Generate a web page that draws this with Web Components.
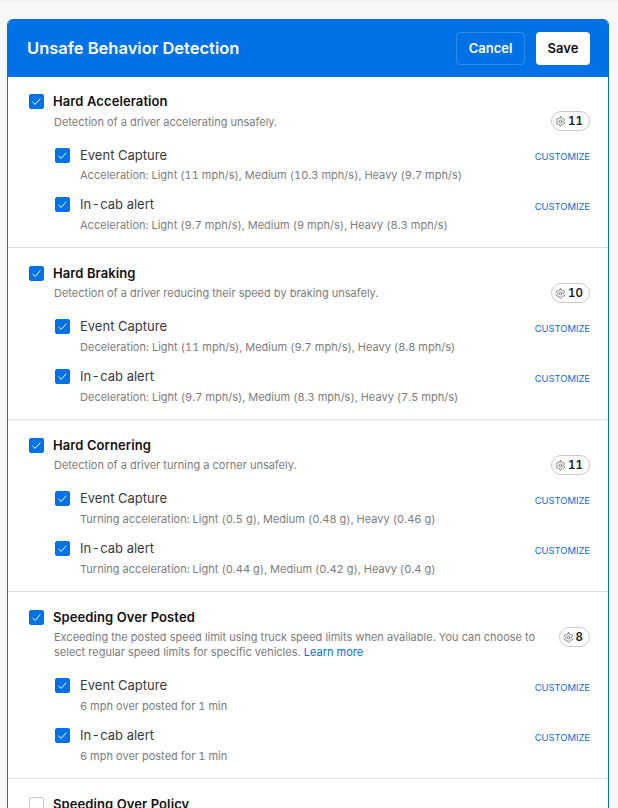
<!DOCTYPE html>
<html>
<head>
<meta charset="utf-8">
<title>Unsafe Behavior Detection</title>
<style>
  html, body { margin: 0; height: 808px; overflow: hidden; background: #f7f7f7; }
  body { font-family: Inter, "Liberation Sans", sans-serif; border-top: 1px solid #f0f0f0; box-sizing: border-box; padding: 18px 9px 0 7px; }
</style>
</head>
<body>
<behavior-panel heading="Unsafe Behavior Detection">
  <behavior-section heading="Hard Acceleration" count="11" first checked>
    Detection of a driver accelerating unsafely.
    <behavior-option slot="options" compact label="Event Capture" detail="Acceleration: Light (11 mph/s), Medium (10.3 mph/s), Heavy (9.7 mph/s)"></behavior-option>
    <behavior-option slot="options" label="In-cab alert" detail="Acceleration: Light (9.7 mph/s), Medium (9 mph/s), Heavy (8.3 mph/s)"></behavior-option>
  </behavior-section>
  <behavior-section heading="Hard Braking" count="10" checked>
    Detection of a driver reducing their speed by braking unsafely.
    <behavior-option slot="options" label="Event Capture" detail="Deceleration: Light (11 mph/s), Medium (9.7 mph/s), Heavy (8.8 mph/s)"></behavior-option>
    <behavior-option slot="options" label="In-cab alert" detail="Deceleration: Light (9.7 mph/s), Medium (8.3 mph/s), Heavy (7.5 mph/s)"></behavior-option>
  </behavior-section>
  <behavior-section heading="Hard Cornering" count="11" checked>
    Detection of a driver turning a corner unsafely.
    <behavior-option slot="options" label="Event Capture" detail="Turning acceleration: Light (0.5 g), Medium (0.48 g), Heavy (0.46 g)"></behavior-option>
    <behavior-option slot="options" label="In-cab alert" detail="Turning acceleration: Light (0.44 g), Medium (0.42 g), Heavy (0.4 g)"></behavior-option>
  </behavior-section>
  <behavior-section heading="Speeding Over Posted" count="8" checked>
    Exceeding the posted speed limit using truck speed limits when available. You can choose to select regular speed limits for specific vehicles. <a href="#" style="color:#0b6bd8;text-decoration:none">Learn more</a>
    <behavior-option slot="options" label="Event Capture" detail="6 mph over posted for 1 min"></behavior-option>
    <behavior-option slot="options" label="In-cab alert" detail="6 mph over posted for 1 min"></behavior-option>
  </behavior-section>
  <behavior-section heading="Speeding Over Policy"></behavior-section>
</behavior-panel>

<script>
class CheckBox extends HTMLElement {
    constructor() {
        super();
        this.attachShadow({ mode: 'open' });
    }

    connectedCallback() {
        const on = this.hasAttribute('checked');
        this.shadowRoot.innerHTML = `
            <style>
                :host {
                    display: block;
                    flex: none;
                    width: 15px;
                    height: 15px;
                    box-sizing: border-box;
                    border-radius: 2px;
                    background: ${on ? '#0072e6' : '#fff'};
                    border: 1px solid ${on ? '#0072e6' : '#c4c4c4'};
                }
                svg { display: block; width: 13px; height: 13px; }
            </style>
            ${on ? '<svg viewBox="0 0 13 13"><path d="M2.6 6.9 5.2 9.4 10.3 3.6" fill="none" stroke="#fff" stroke-width="1"/></svg>' : ''}
        `;
    }
}

class RuleBadge extends HTMLElement {
    constructor() {
        super();
        this.attachShadow({ mode: 'open' });
    }

    connectedCallback() {
        this.shadowRoot.innerHTML = `
            <style>
                :host {
                    display: inline-flex;
                    align-items: center;
                    gap: 2px;
                    flex: none;
                    height: 20px;
                    box-sizing: border-box;
                    padding: 0 6px 0 3px;
                    border: 1px solid #c9c9c9;
                    border-radius: 10px;
                    background: #fff;
                    font-size: 11.5px;
                    font-weight: 600;
                    color: #1c1c1c;
                    font-variant-numeric: tabular-nums;
                }
                svg { display: block; width: 11px; height: 11px; }
            </style>
            <svg viewBox="0 0 24 24" fill="none" stroke="#666" stroke-width="1.8" stroke-linecap="round" stroke-linejoin="round">
                <path d="M12.2 2h-.4a2 2 0 0 0-2 2v.2a2 2 0 0 1-1 1.7l-.4.3a2 2 0 0 1-2 0l-.2-.1a2 2 0 0 0-2.7.7l-.2.4a2 2 0 0 0 .7 2.7l.2.1a2 2 0 0 1 1 1.7v.5a2 2 0 0 1-1 1.7l-.2.1a2 2 0 0 0-.7 2.7l.2.4a2 2 0 0 0 2.7.7l.2-.1a2 2 0 0 1 2 0l.4.3a2 2 0 0 1 1 1.7v.2a2 2 0 0 0 2 2h.4a2 2 0 0 0 2-2v-.2a2 2 0 0 1 1-1.7l.4-.3a2 2 0 0 1 2 0l.2.1a2 2 0 0 0 2.7-.7l.2-.4a2 2 0 0 0-.7-2.7l-.2-.1a2 2 0 0 1-1-1.7v-.5a2 2 0 0 1 1-1.7l.2-.1a2 2 0 0 0 .7-2.7l-.2-.4a2 2 0 0 0-2.7-.7l-.2.1a2 2 0 0 1-2 0l-.4-.3a2 2 0 0 1-1-1.7V4a2 2 0 0 0-2-2z"/>
                <circle cx="12" cy="12" r="3"/>
            </svg>
            <span><slot></slot></span>
        `;
    }
}

class BehaviorOption extends HTMLElement {
    constructor() {
        super();
        this.attachShadow({ mode: 'open' });
    }

    connectedCallback() {
        // the reference sets the hyphen in "In-cab" with air on both sides
        const label = this.getAttribute('label').replace('-', '<span class="hy">-</span>');
        this.shadowRoot.innerHTML = `
            <style>
                :host { display: block; height: 50px; }
                :host([compact]) { height: 49px; }
                :host([compact]) .detail { margin-top: 1px; }
                :host([compact]) .customize { padding-top: 3px; }
                .top { display: flex; align-items: center; height: 20px; }
                .label {
                    flex: 1;
                    margin-left: 10px;
                    font-size: 13px;
                    color: #3a3a3a;
                }
                .hy { margin: 0 1.5px; }
                .customize {
                    font-size: 9.4px;
                    color: #0b6bd8;
                    padding-top: 5px;
                }
                .detail {
                    margin: 2px 0 0 25px;
                    font-size: 11px;
                    line-height: 18px;
                    letter-spacing: 0.015px;
                    color: #7c7c7c;
                    font-variant-numeric: tabular-nums;
                }
            </style>
            <div class="top">
                <check-box checked></check-box>
                <span class="label">${label}</span>
                <span class="customize">CUSTOMIZE</span>
            </div>
            <div class="detail">${this.getAttribute('detail')}</div>
        `;
    }
}

class BehaviorSection extends HTMLElement {
    constructor() {
        super();
        this.attachShadow({ mode: 'open' });
    }

    connectedCallback() {
        const checked = this.hasAttribute('checked') ? 'checked' : '';
        this.shadowRoot.innerHTML = `
            <style>
                :host {
                    display: block;
                    padding: 15px 18px 3px 21px;
                    border-bottom: 1px solid #e0e0e0;
                }
                :host([first]) { padding-top: 14px; }
                :host([first]) .desc { padding-top: 4px; }
                :host(:last-child) { border-bottom: 0; }
                .top { display: flex; align-items: center; gap: 9px; height: 20px; }
                h3 {
                    margin: 0;
                    font-size: 13px;
                    font-weight: 600;
                    color: #111;
                    letter-spacing: 0.1px;
                }
                .body { display: flex; align-items: flex-start; gap: 16px; padding-left: 25px; }
                .desc {
                    flex: 1;
                    font-size: 11px;
                    line-height: 15px;
                    color: #7c7c7c;
                    padding-top: 3px;
                }
                rule-badge { margin-bottom: -20px; }
                .options { padding: 15px 0 0 26px; }
            </style>
            <div class="top">
                <check-box ${checked}></check-box>
                <h3>${this.getAttribute('heading')}</h3>
            </div>
            <div class="body">
                <div class="desc"><slot></slot></div>
                ${this.getAttribute('count') ? `<rule-badge>${this.getAttribute('count')}</rule-badge>` : ''}
            </div>
            <div class="options"><slot name="options"></slot></div>
        `;
    }
}

class BehaviorPanel extends HTMLElement {
    constructor() {
        super();
        this.attachShadow({ mode: 'open' });
    }

    connectedCallback() {
        this.shadowRoot.innerHTML = `
            <style>
                :host {
                    display: block;
                    background: #fff;
                    border-radius: 6px 6px 0 0;
                    border: 1px solid #0072e6;
                    border-top: 0;
                    overflow: hidden;
                }
                header {
                    display: flex;
                    align-items: center;
                    height: 58px;
                    padding: 0 18px 0 19px;
                    background: #0072e6;
                    color: #fff;
                }
                h2 { flex: 1; margin: 0; font-size: 16.5px; font-weight: 600; }
                button {
                    height: 33px;
                    border-radius: 4px;
                    font: 600 13px Inter, "Liberation Sans", sans-serif;
                    padding: 0;
                }
                .cancel {
                    width: 69px;
                    margin-right: 11px;
                    background: transparent;
                    color: #fff;
                    border: 1px solid #2f8cec;
                }
                .save { width: 54px; background: #fff; color: #111; border: 0; }
            </style>
            <header>
                <h2>${this.getAttribute('heading')}</h2>
                <button class="cancel">Cancel</button>
                <button class="save">Save</button>
            </header>
            <slot></slot>
        `;
    }
}

customElements.define('check-box', CheckBox);
customElements.define('rule-badge', RuleBadge);
customElements.define('behavior-option', BehaviorOption);
customElements.define('behavior-section', BehaviorSection);
customElements.define('behavior-panel', BehaviorPanel);
</script>
</body>
</html>
